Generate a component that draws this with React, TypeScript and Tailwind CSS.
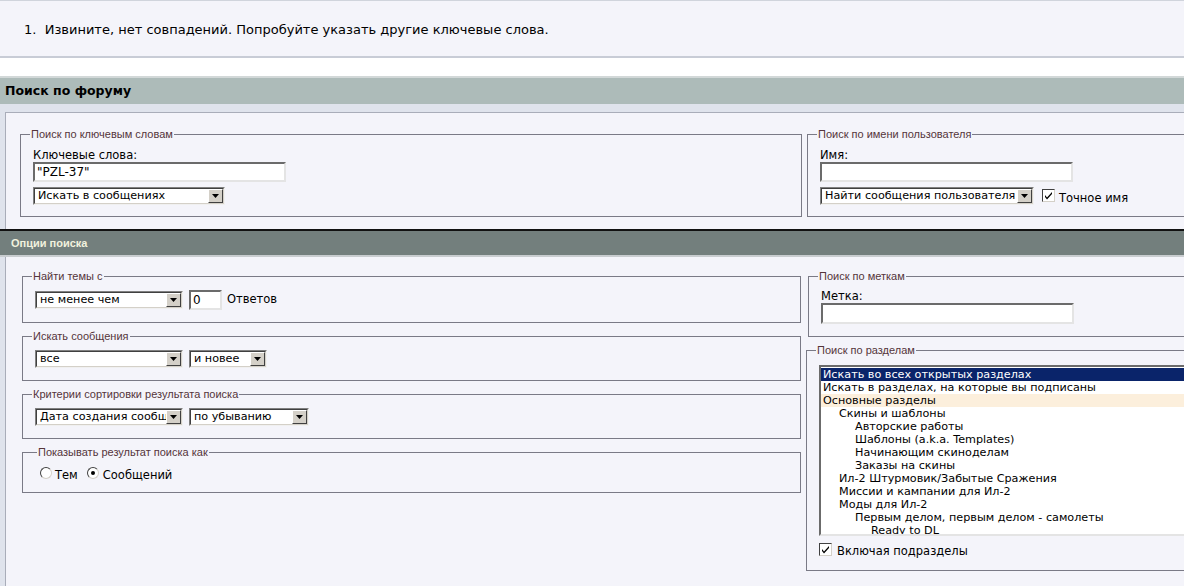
import React from 'react';

const FONT = { fontFamily: '"DejaVu Sans", Verdana, sans-serif' };

function Arrow() {
  return (
    <div className="flex h-[14px] w-[15px] shrink-0 items-center justify-center border border-t-white border-l-white border-b-[#404040] border-r-[#404040] bg-[#d4d0c8]">
      <svg width="7" height="4" viewBox="0 0 7 4">
        <path d="M0 0h7L3.5 4z" fill="#000" />
      </svg>
    </div>
  );
}

function Select({ text, className }: { text: string; className: string }) {
  return (
    <div className={`h-[18px] border border-t-[#808080] border-l-[#808080] border-b-[#f0f0f0] border-r-[#f0f0f0] ${className}`}>
      <div className="flex h-full items-center border border-t-[#404040] border-l-[#404040] border-b-[#d4d0c8] border-r-[#d4d0c8] bg-white pl-[3px]">
        <span className="flex-1 overflow-hidden whitespace-nowrap text-[11.2px] leading-[14px] text-black">{text}</span>
        <Arrow />
      </div>
    </div>
  );
}

function TextBox({ value, className }: { value?: string; className: string }) {
  return (
    <div className={`border-2 border-t-[#6b6b6b] border-l-[#6b6b6b] border-b-[#e4e4e4] border-r-[#e4e4e4] bg-white px-[2px] text-[12px] leading-[16px] text-black ${className}`}>
      {value}
    </div>
  );
}

function Check() {
  return (
    <div className="flex h-[13px] w-[13px] shrink-0 items-center justify-center border border-t-[#404040] border-l-[#404040] border-b-[#d4d0c8] border-r-[#d4d0c8] bg-white">
      <svg width="9" height="9" viewBox="0 0 9 9">
        <path d="M1 4l2 2.5L8 1v2L3 8.5 1 6z" fill="#000" />
      </svg>
    </div>
  );
}

function Radio({ on }: { on?: boolean }) {
  return (
    <div className="flex h-[12px] w-[12px] shrink-0 items-center justify-center rounded-full border border-t-[#404040] border-l-[#404040] border-b-[#d4d0c8] border-r-[#d4d0c8] bg-white">
      {on && <div className="h-[4px] w-[4px] rounded-full bg-black" />}
    </div>
  );
}

function Box({ legend, className, children }: { legend: string; className: string; children: React.ReactNode }) {
  return (
    <fieldset className={`border border-[#7a7a86] pl-[12px] ${className}`}>
      <legend
        className="ml-[-3px] px-[1px] text-[11px] leading-[13px] text-[#55353a]"
        style={{ fontFamily: '"Liberation Sans", Tahoma, sans-serif' }}
      >
        {legend}
      </legend>
      {children}
    </fieldset>
  );
}

const forums: [string, number, string?][] = [
  ['Искать во всех открытых разделах', 0, 'sel'],
  ['Искать в разделах, на которые вы подписаны', 0],
  ['Основные разделы', 0, 'cat'],
  ['Скины и шаблоны', 1],
  ['Авторские работы', 2],
  ['Шаблоны (a.k.a. Templates)', 2],
  ['Начинающим скиноделам', 2],
  ['Заказы на скины', 2],
  ['Ил-2 Штурмовик/Забытые Сражения', 1],
  ['Миссии и кампании для Ил-2', 1],
  ['Моды для Ил-2', 1],
  ['Первым делом, первым делом - самолеты', 2],
  ['Ready to DL', 3],
];

const indent = ['pl-[2px]', 'pl-[18px]', 'pl-[34px]', 'pl-[50px]'];

export default function App() {
  return (
    <div className="h-[586px] w-[1184px] overflow-hidden bg-white text-black" style={FONT}>
      {/* message */}
      <div className="border-t border-b-2 border-t-[#d0d4dc] border-b-[#c8ccd6] bg-[#f4f4fa] pl-[24px] pt-[20px] pb-[18px] text-[13px] leading-[17px]">
        1.&nbsp; Извините, нет совпадений. Попробуйте указать другие ключевые слова.
      </div>

      <div className="h-[18px]" />

      {/* header: search forum */}
      <div className="w-[1230px]">
        <div className="flex h-[28px] items-center border-t-2 border-[#d2d8d8] bg-[#adbbb9] pl-[5px] pt-[1px] text-[12.5px] font-bold text-black">
          Поиск по форуму
        </div>
        <div className="bg-[#dfe3ec] pl-[5px] pt-[8px]">
          <div className="border-l border-t border-[#a9adb9] bg-[#f4f4fa] pl-[14px] pt-[15px] pb-[12px]">
            <div className="flex gap-[5px]">
              <Box legend="Поиск по ключевым словам" className="w-[782px] pt-[7px] pb-[11px]">
                <div className="text-[11.5px] leading-[14px]">Ключевые слова:</div>
                <TextBox value={'"PZL-37"'} className="h-[20px] w-[253px]" />
                <Select text="Искать в сообщениях" className="mt-[5px] w-[192px]" />
              </Box>
              <Box legend="Поиск по имени пользователя" className="w-[420px] pt-[7px] pb-[11px] pl-[10px]">
                <div className="text-[11.5px] leading-[14px]">Имя:</div>
                <TextBox className="h-[20px] w-[253px]" />
                <div className="mt-[5px] flex items-center">
                  <Select text="Найти сообщения пользователя" className="w-[214px]" />
                  <div className="ml-[8px] mt-[-2px]">
                    <Check />
                  </div>
                  <span className="ml-[4px] mt-[3px] text-[11.5px] leading-[14px]">Точное имя</span>
                </div>
              </Box>
            </div>
          </div>
        </div>

        {/* header: options */}
        <div
          className="flex h-[28px] items-center border-t-2 border-b-2 border-t-[#111] border-b-[#c8cccf] bg-[#737f7d] pl-[11px] text-[11px] font-bold text-[#f1f1de]"
          style={{ fontFamily: '"Liberation Sans", Tahoma, sans-serif' }}
        >
          Опции поиска
        </div>
        <div className="bg-[#dfe3ec] pl-[5px]">
          <div className="flex gap-[7px] border-l border-[#a9adb9] bg-[#f4f4fa] pl-[16px] pt-[13px] pb-[20px]">
            <div className="flex w-[779px] flex-col gap-[7px]">
              <Box legend="Найти темы с" className="pt-[7px] pb-[12px]">
                <div className="flex items-center">
                  <Select text="не менее чем" className="w-[148px]" />
                  <TextBox value="0" className="ml-[6px] h-[20px] w-[33px]" />
                  <span className="ml-[5px] text-[11.5px]">Ответов</span>
                </div>
              </Box>
              <Box legend="Искать сообщения" className="pt-[7px] pb-[12px]">
                <div className="flex items-center">
                  <Select text="все" className="w-[148px]" />
                  <Select text="и новее" className="ml-[6px] w-[78px]" />
                </div>
              </Box>
              <Box legend="Критерии сортировки результата поиска" className="pt-[7px] pb-[12px]">
                <div className="flex items-center">
                  <Select text="Дата создания сообщ" className="w-[148px]" />
                  <Select text="по убыванию" className="ml-[6px] w-[120px]" />
                </div>
              </Box>
              <Box legend="Показывать результат поиска как" className="pt-[9px] pb-[10px] pl-[17px]">
                <div className="flex items-center text-[11.5px] leading-[14px]">
                  <div className="mt-[-4px]"><Radio /></div>
                  <span className="ml-[3px]">Тем</span>
                  <div className="ml-[9px] mt-[-4px]"><Radio on /></div>
                  <span className="ml-[4px]">Сообщений</span>
                </div>
              </Box>
            </div>

            <div className="flex w-[420px] flex-col gap-[7px]">
              <Box legend="Поиск по меткам" className="pt-[6px] pb-[12px] pl-[10px]">
                <div className="text-[11.5px] leading-[14px]">Метка:</div>
                <TextBox className="h-[21px] w-[253px]" />
              </Box>
              <Box legend="Поиск по разделам" className="ml-[-2px] pt-[8px] pb-[12px] pl-[10px]">
                <div className="h-[171px] overflow-hidden border-2 border-t-[#6b6b6b] border-l-[#6b6b6b] border-b-[#e4e4e4] border-r-[#e4e4e4] bg-white pt-[1px]">
                  {forums.map(([t, lvl, kind]) => (
                    <div
                      key={t}
                      className={`h-[13px] whitespace-nowrap text-[11.2px] leading-[13px] ${indent[lvl]} ${
                        kind === 'sel' ? 'bg-[#0a246a] text-white' : kind === 'cat' ? 'bg-[#fcefdc]' : ''
                      }`}
                    >
                      {t}
                    </div>
                  ))}
                </div>
                <div className="mt-[8px] flex items-center text-[11.5px] leading-[14px]">
                  <div className="mt-[-3px]"><Check /></div>
                  <span className="ml-[5px]">Включая подразделы</span>
                </div>
              </Box>
            </div>
          </div>
        </div>
      </div>
    </div>
  );
}
